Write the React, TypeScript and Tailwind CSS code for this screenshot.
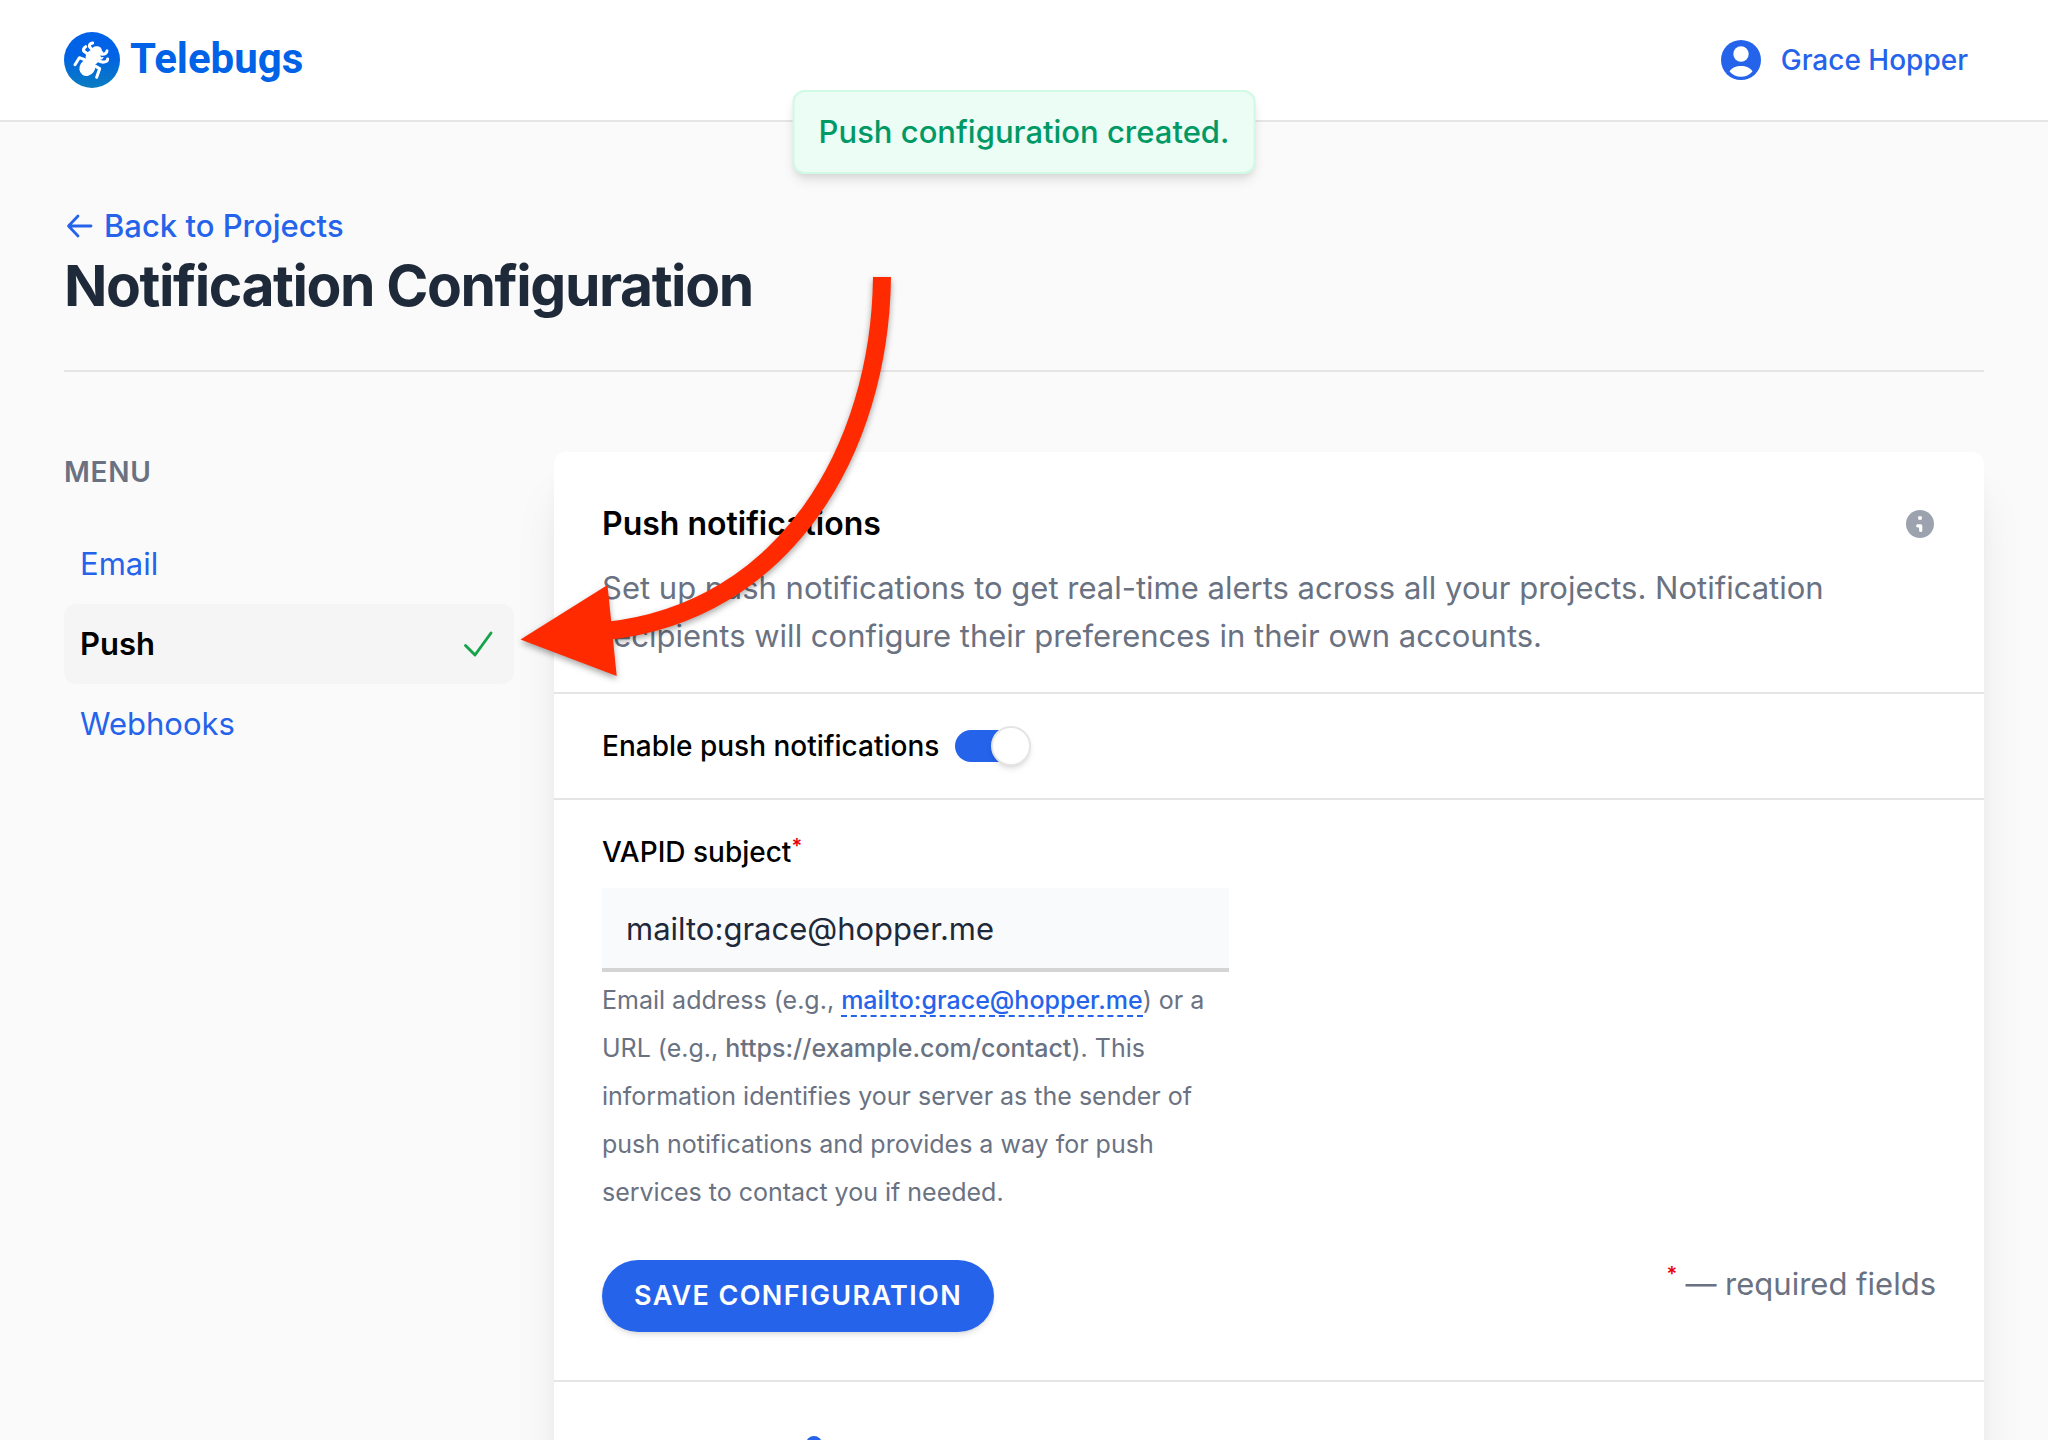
import { useState } from 'react';

const menuItems = [
  { label: 'Email', active: false },
  { label: 'Push', active: true },
  { label: 'Webhooks', active: false },
];

const Logo = () => (
  <a href="#" className="flex items-center gap-2.5">
    <svg viewBox="0 0 168 168" className="size-14" aria-hidden="true">
      <defs>
        <linearGradient id="logo-fill" x1="0" y1="0" x2="0" y2="1">
          <stop offset="0.4" stopColor="#0062e6" />
          <stop offset="1" stopColor="#0a7cc0" />
        </linearGradient>
      </defs>
      <circle cx="84" cy="84" r="84" fill="url(#logo-fill)" />
      <ellipse cx="70" cy="107" rx="23" ry="26" fill="#fff" transform="rotate(35 70 107)" />
      <path d="M66 82C62 70 70 58 82 54c2-8 10-13 19-11 8 1 13 7 13 14l5 3-10 8 2 8 8-1c-1 6-7 9-13 9-3 9-14 16-25 14z" fill="#fff" />
      <g fill="none" stroke="#fff" strokeWidth="9" strokeLinecap="round" strokeLinejoin="round">
        <path d="M74 68 59 57c-2-6 1-10 6-13" />
        <path d="M86 56 76 43c0-6 4-9 10-10" />
        <path d="M64 84 46 77 33 98" />
        <path d="M100 84c8 6 20 8 29 3l2-6" />
        <path d="M90 100l17 10-9 26" />
        <path d="M112 66c9 2 17-2 17-10" />
      </g>
    </svg>
    <span className="pb-0.5 font-['Roboto',sans-serif] text-[42px] leading-14 font-bold text-[#0062e6]">Telebugs</span>
  </a>
);

const Header = () => (
  <header className="flex h-[122px] items-center justify-between border-b-2 border-[#e5e5e5] bg-white pr-20 pl-16">
    <Logo />
    <a href="#" className="flex items-center gap-5 text-[28px] font-medium text-[#2563eb]">
      <svg viewBox="0 0 40 40" className="size-10" aria-hidden="true">
        <circle cx="20" cy="20" r="20" fill="#2563eb" />
        <circle cx="20" cy="14" r="7.7" fill="#fff" />
        <path d="M8.5 31.500C11 27.500 15 26 20 26s9 1.500 11.500 5.500C28.500 35 24.500 36.700 20 36.700S11.500 35 8.500 31.500z" fill="#fff" />
      </svg>
      Grace Hopper
    </a>
  </header>
);

const Sidebar = () => (
  <nav className="w-[450px] shrink-0" aria-label="Menu">
    <h2 className="mb-8 text-[28px] leading-10 font-semibold tracking-wide text-gray-500 uppercase">Menu</h2>
    <ul className="text-[31px] leading-12">
      {menuItems.map(({ label, active }) => (
        <li key={label}>
          <a
            href="#"
            aria-current={active ? 'page' : undefined}
            className={
              active
                ? 'flex items-center justify-between rounded-xl bg-neutral-100 py-4 pr-5 pl-4 font-semibold text-black'
                : 'flex items-center px-4 py-4 text-[#2563eb]'
            }
          >
            {label}
            {active && (
              <svg viewBox="0 0 32 32" className="size-8" fill="none" stroke="#16a34a" strokeWidth="2.900" strokeLinecap="round" strokeLinejoin="round" aria-hidden="true">
                <path d="M3.500 17.500l9.500 9.500L29 5" />
              </svg>
            )}
          </a>
        </li>
      ))}
    </ul>
  </nav>
);

const InfoIcon = () => (
  <svg viewBox="0 0 28 28" className="size-7" aria-hidden="true">
    <circle cx="14" cy="14" r="14" fill="#9ca3af" />
    <circle cx="14" cy="8" r="2.100" fill="#fff" />
    <path d="M11.700 15.800h3v4.700" fill="none" stroke="#fff" strokeWidth="3.200" strokeLinecap="round" strokeLinejoin="round" />
  </svg>
);

const PushCard = () => {
  const [enabled, setEnabled] = useState(true);
  const [subject, setSubject] = useState('mailto:grace@hopper.me');

  return (
    <div className="min-w-0 flex-1 rounded-xl bg-white shadow-[0_40px_50px_-10px_rgba(0,0,0,0.1),0_16px_20px_-12px_rgba(0,0,0,0.1)]">
      <section className="border-b-2 border-[#e5e5e5] px-12 pt-12 pb-8">
        <div className="mb-4 flex items-center justify-between">
          <h2 className="text-[32px] leading-12 font-semibold text-black">Push notifications</h2>
          <button type="button" aria-label="About push notifications" className="mr-0.5">
            <InfoIcon />
          </button>
        </div>
        <p className="max-w-[1240px] text-[31px] leading-12 text-gray-500">
          Set up push notifications to get real-time alerts across all your projects. Notification recipients will
          configure their preferences in their own accounts.
        </p>
      </section>

      <section className="flex items-center gap-4 border-b-2 border-[#e5e5e5] px-12 py-8">
        <label htmlFor="enable-push" className="text-[28px] leading-10 font-medium text-black">
          Enable push notifications
        </label>
        <input
          id="enable-push"
          type="checkbox"
          checked={enabled}
          onChange={(e) => setEnabled(e.target.checked)}
          className="relative h-8 w-[72px] appearance-none rounded-full bg-gray-300 before:absolute before:-top-1 before:left-0 before:size-10 before:rounded-full before:border-2 before:border-[#e5e5e5] before:bg-white before:shadow-md checked:bg-[#2563eb] checked:before:left-9"
        />
      </section>

      <form className="border-b-2 border-[#e5e5e5] px-12 pt-8 pb-12" onSubmit={(e) => e.preventDefault()}>
        <label htmlFor="vapid-subject" className="flex text-[28px] leading-10 font-medium text-black">
          VAPID subject
          <span className="text-xl leading-7 font-semibold text-red-600">*</span>
        </label>
        <div className="mb-11 w-[627px]">
          <input
            id="vapid-subject"
            type="text"
            required
            value={subject}
            onChange={(e) => setSubject(e.target.value)}
            className="mt-4 block h-21 w-full border-b-4 border-[#d4d4d4] bg-[#f9fafc] px-6 text-[31px] text-gray-800 outline-none"
          />
          <p className="mt-1 text-[25px] leading-12 text-gray-500">
            Email address (e.g.,{' '}
            <a href="#" className="border-b-2 border-dashed border-[#2563eb] font-medium text-[#2563eb]">
              mailto:grace@hopper.me
            </a>
            ) or a URL (e.g., <strong className="font-medium">https://example.com/contact</strong>). This information
            identifies your server as the sender of push notifications and provides a way for push services to contact
            you if needed.
          </p>
        </div>
        <div className="flex items-start justify-between">
          <button
            type="submit"
            className="h-18 rounded-full bg-[#2563eb] px-8 text-[27px] font-semibold tracking-wider text-white uppercase shadow-md"
          >
            Save configuration
          </button>
          <p className="flex gap-2 text-[31px] leading-12 text-gray-500">
            <span className="text-xl leading-7 font-semibold text-red-600">*</span>
            <span>— required fields</span>
          </p>
        </div>
      </form>

      <section className="flex items-start px-12 pt-12 text-[28px] leading-11">
        <h3 className="w-51 font-semibold text-black">ACT Config</h3>
        <span className="mt-1.5 size-4 rounded-full bg-[#2563eb]" />
      </section>
    </div>
  );
};

const Toast = () => (
  <div
    role="status"
    className="absolute top-[90px] left-1/2 -translate-x-1/2 rounded-xl border-2 border-emerald-100 bg-emerald-50 px-6 py-4 text-[31px] leading-12 font-medium whitespace-nowrap text-emerald-600 shadow-[0_8px_12px_-2px_rgba(0,0,0,0.1),0_4px_8px_-4px_rgba(0,0,0,0.1)]"
  >
    Push configuration created.
  </div>
);

const Arrow = () => (
  <svg
    viewBox="500 260 420 440"
    className="pointer-events-none absolute top-[260px] left-[500px] h-[440px] w-[420px] drop-shadow-[0_3px_3px_rgba(0,0,0,0.35)]"
    aria-hidden="true"
  >
    <path d="M882 277C880 450 785 612 606 631" fill="none" stroke="#ff2a00" strokeWidth="18" />
    <path d="M520.500 639.500 607.500 585 616.700 676z" fill="#ff2a00" />
  </svg>
);

export default function App() {
  return (
    <div className="relative h-screen overflow-hidden bg-[#fafafa] font-['Inter',sans-serif]">
      <Header />
      <Toast />
      <main className="px-16 pt-20">
        <div className="mb-20 border-b-2 border-[#e5e5e5] pb-12">
          <a href="#" className="flex items-center gap-2 text-[31px] leading-12 font-medium text-[#2563eb]">
            <svg viewBox="0 0 32 32" className="size-8" fill="none" stroke="currentColor" strokeWidth="2.800" strokeLinecap="round" strokeLinejoin="round" aria-hidden="true">
              <path d="M27 16H5M14 6L4.500 16l9.500 10" />
            </svg>
            Back to Projects
          </a>
          <h1 className="text-[57px] leading-18 font-bold tracking-tight text-gray-800">Notification Configuration</h1>
        </div>
        <div className="flex items-start gap-10">
          <Sidebar />
          <PushCard />
        </div>
      </main>
      <Arrow />
    </div>
  );
}
